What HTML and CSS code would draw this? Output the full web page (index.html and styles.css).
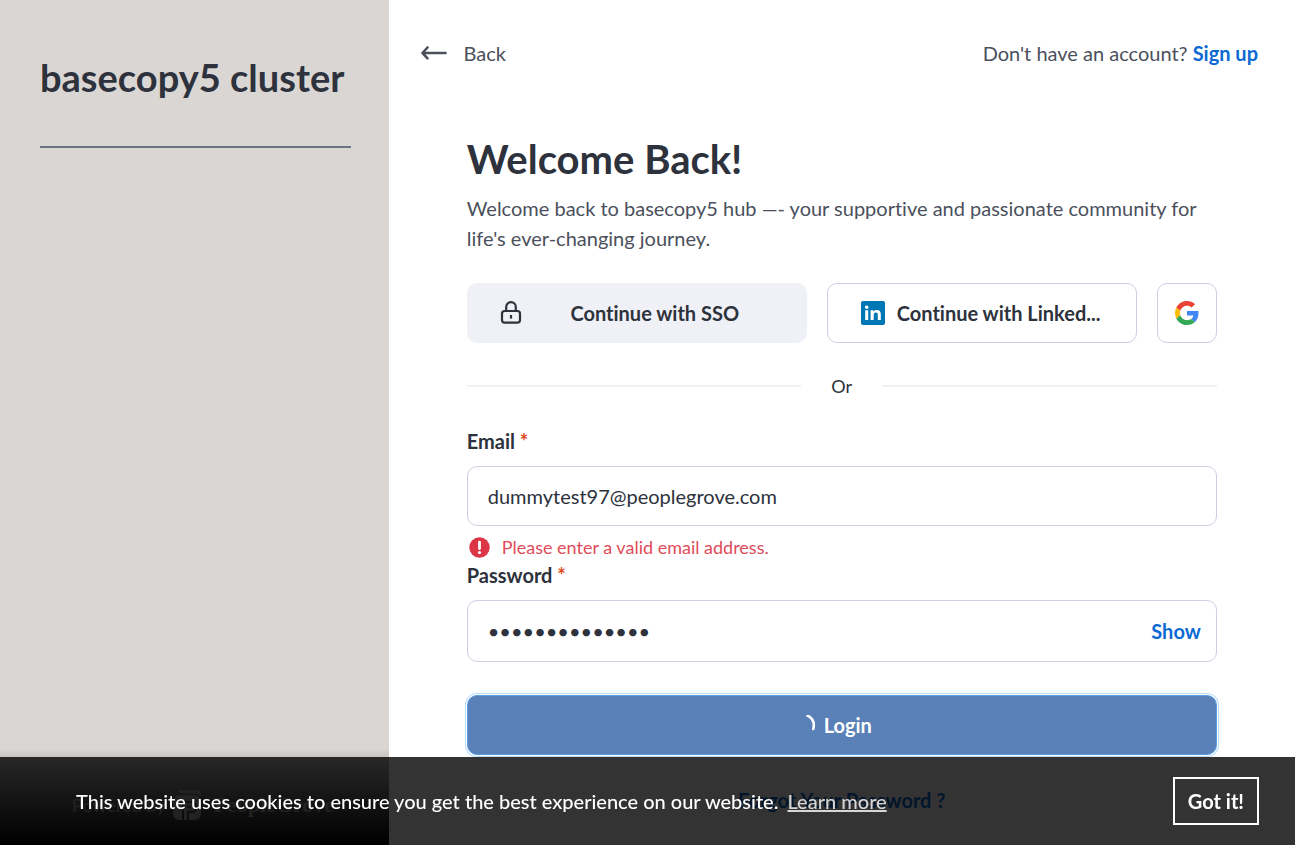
FILE: index.html
```html
<!DOCTYPE html>
<html lang="en">
<head>
<meta charset="utf-8">
<meta name="viewport" content="width=device-width, initial-scale=1">
<title>Welcome Back</title>
<link rel="stylesheet" href="styles.css">
</head>
<body>
<div class="layout">
  <aside class="sidebar">
    <div class="brand">basecopy5 cluster</div>
    <div class="powered">
      <span class="powered-by">Powered by</span>
      <svg width="28" height="30" viewBox="0 0 28 30" fill="currentColor" aria-hidden="true"><path d="M5 0h18q5 0 5 5v1q-2-2.500-6-2.500H9Q6 3.500 5 0z"/><path fill-rule="evenodd" d="M0 12q0-7 7-7h14q7 0 7 7v11q0 7-7 7h-5v-7h2q6 0 6-6t-6-6H9v19H7q-7 0-7-7zM11 13h7q4 0 4 4t-4 4h-4v9h-3zM14 16v2h3q1 0 1-1t-1-1z"/></svg>
      <span class="powered-name">PeopleGrove</span>
    </div>
  </aside>
  <main class="main">
    <header class="topbar">
      <a class="back" href="#">
        <svg width="26" height="14" viewBox="0 0 26 14" fill="none" stroke="currentColor" stroke-width="2.6" stroke-linecap="round" stroke-linejoin="round" aria-hidden="true"><path d="M6.5 1.5 1.5 7l5 5.3M1.5 7H24.5"/></svg>
        <span>Back</span>
      </a>
      <p class="signup">Don't have an account? <a href="#">Sign up</a></p>
    </header>
    <section class="panel">
      <h1>Welcome Back!</h1>
      <p class="intro">Welcome back to basecopy5 hub —- your supportive and passionate community for life's ever-changing journey.</p>
      <div class="providers">
        <button class="provider provider-sso" type="button">
          <svg width="24" height="24" viewBox="0 0 24 24" fill="none" stroke="#2d323c" stroke-width="2.2" aria-hidden="true"><rect x="3" y="10" width="18" height="11.6" rx="2.6"/><path d="M7.2 10V6a4.8 4.8 0 0 1 9.6 0v4"/><path d="M12 14v3.6"/></svg>
          <span>Continue with SSO</span>
        </button>
        <button class="provider provider-linkedin" type="button">
          <svg width="24" height="24" viewBox="0 0 24 24" aria-hidden="true"><rect width="24" height="24" rx="2" fill="#0077b5"/><path fill="#fff" d="M4.2 9.2h3V19h-3zM5.7 4.400a1.800 1.800 0 1 1 0 3.600 1.800 1.800 0 0 1 0-3.600zM9.600 9.200h2.900v1.400c.6-1 1.700-1.700 3.200-1.700 3.200 0 4.100 2 4.100 4.800V19h-3v-4.700c0-1.400-.3-2.800-1.900-2.800-1.700 0-2.200 1.300-2.200 2.800V19H9.600z"/></svg>
          <span>Continue with Linked...</span>
        </button>
        <button class="provider provider-google" type="button" aria-label="Continue with Google">
          <svg width="24" height="24" viewBox="0 0 48 48" aria-hidden="true"><path fill="#EA4335" d="M24 9.5c3.54 0 6.71 1.22 9.21 3.6l6.85-6.85C35.9 2.38 30.47 0 24 0 14.62 0 6.51 5.38 2.56 13.22l7.98 6.19C12.43 13.72 17.74 9.5 24 9.5z"/><path fill="#4285F4" d="M46.98 24.55c0-1.57-.15-3.09-.38-4.55H24v9.02h12.94c-.58 2.96-2.26 5.48-4.78 7.18l7.73 6c4.51-4.18 7.09-10.36 7.09-17.65z"/><path fill="#FBBC05" d="M10.53 28.59A14.5 14.5 0 0 1 9.77 24c0-1.6.27-3.14.76-4.59l-7.98-6.19A23.9 23.9 0 0 0 0 24c0 3.88.92 7.54 2.56 10.78z"/><path fill="#34A853" d="M24 48c6.48 0 11.93-2.13 15.89-5.81l-7.73-6c-2.15 1.45-4.92 2.3-8.16 2.3-6.26 0-11.57-4.22-13.47-9.91l-7.98 6.19C6.51 42.62 14.62 48 24 48z"/></svg>
        </button>
      </div>
      <div class="divider"><span>Or</span></div>
      <form>
        <label class="label" for="email">Email <span class="required">*</span></label>
        <div class="field"><input id="email" type="email" value="dummytest97@peoplegrove.com" aria-describedby="email-error"></div>
        <p class="error" id="email-error">
          <svg width="21" height="21" viewBox="0 0 21 21" aria-hidden="true"><circle cx="10.5" cy="10.5" r="10.2" fill="#dc3545"/><path d="M10.5 5.2v6.4" stroke="#fff" stroke-width="2.8" stroke-linecap="round"/><circle cx="10.5" cy="15.6" r="1.6" fill="#fff"/></svg>
          <span>Please enter a valid email address.</span>
        </p>
        <label class="label" for="password">Password <span class="required">*</span></label>
        <div class="field field-password"><input id="password" type="password" value="dummypassword1"><button class="show" type="button">Show</button></div>
        <button class="login" type="button">
          <svg width="20" height="20" viewBox="0 0 20 20" fill="none" stroke="#fff" stroke-width="2.6" stroke-linecap="round" aria-hidden="true"><path d="M11.5 .5C16.5 3 18.8 8 17.3 14"/></svg>
          <span>Login</span>
        </button>
        <a class="forgot" href="#">Forgot Your Password ?</a>
      </form>
    </section>
  </main>
</div>
<div class="cookies" role="dialog" aria-label="Cookie consent">
  <p>This website uses cookies to ensure you get the best experience on our website. <a href="#">Learn more</a></p>
  <button type="button">Got it!</button>
</div>
</body>
</html>
```
FILE: styles.css
```css
* { box-sizing: border-box; }
body {
  margin: 0;
  font-family: Lato, "Liberation Sans", sans-serif;
  font-size: 20px;
  line-height: 30px;
  font-variant-ligatures: none;
  color: #2d323c;
  background: #fff;
}
h1, p { margin: 0; }
a { text-decoration: none; }
button, input { font: inherit; color: inherit; font-variant-ligatures: none; }
button { cursor: pointer; }
svg { flex: none; display: block; }

.layout { display: flex; height: 100vh; overflow: hidden; }
.sidebar {
  flex: none;
  width: 30%;
  display: flex;
  flex-direction: column;
  justify-content: space-between;
  background: #dad6d3;
}
.brand {
  margin: 0 38px 0 40px;
  padding: 46px 0 38px;
  border-bottom: 2px solid #6b7280;
  font-size: 38px;
  line-height: 62px;
  font-weight: 700;
  white-space: nowrap;
}
.powered {
  display: flex;
  align-items: center;
  gap: 8px;
  height: 96px;
  padding: 16px 16px 0 72px;
  background: linear-gradient(rgba(0, 0, 0, 0), #000);
  color: #a8a8a8;
}
.powered-by { font-size: 18px; white-space: nowrap; }
.powered-name { padding-left: 4px; font-family: "Liberation Serif", serif; font-weight: 700; font-size: 22px; }

.main { flex: 1; min-width: 0; overflow: hidden; }
.topbar {
  display: flex;
  justify-content: space-between;
  padding: 38px 37px 0 32px;
  color: #4b505c;
}
.back { display: flex; align-items: center; gap: 17px; color: inherit; }
.signup a { color: #0b69d4; font-weight: 700; }
.panel { max-width: 750px; margin: 0 auto; padding-top: 61px; }
h1 { font-size: 40px; line-height: 60px; font-weight: 700; }
.intro { padding-top: 4px; color: #4b505c; }

.providers {
  display: grid;
  grid-template-columns: 34fr 31fr 60px;
  gap: 20px;
  margin-top: 30px;
}
.provider {
  display: flex;
  align-items: center;
  gap: 12px;
  min-width: 0;
  height: 60px;
  padding: 0 32px;
  border: 1px solid #cbd0e2;
  border-radius: 10px;
  background: #fff;
  font-weight: 700;
}
.provider span {
  flex: 1;
  overflow: hidden;
  text-overflow: ellipsis;
  white-space: nowrap;
}
.provider-sso { border: 0; background: #f0f1f6; }
.provider-linkedin { padding: 0 24px 0 33px; text-align: left; }
.provider-google { padding: 0; justify-content: center; }

.divider {
  display: flex;
  align-items: center;
  gap: 30px;
  margin-top: 28px;
  font-size: 18px;
}
.divider::before, .divider::after { content: ""; flex: 1; height: 2px; background: #f0f1f3; }

form { padding-top: 25px; }
.label { display: block; font-weight: 700; }
.required { color: #e04a1b; }
.field {
  display: flex;
  align-items: center;
  height: 60px;
  margin-top: 10px;
  padding: 0 15px 0 20px;
  border: 1px solid #cbd0e2;
  border-radius: 10px;
}
.field input {
  flex: 1;
  min-width: 0;
  padding: 0;
  border: 0;
  outline: 0;
  background: none;
}
.field-password { height: 62px; }
.show { padding: 0; border: 0; background: none; color: #0b69d4; font-weight: 700; }
.error {
  display: flex;
  align-items: center;
  gap: 12px;
  padding: 8px 0 0 2px;
  font-size: 18px;
  line-height: 26px;
  color: #e04b59;
}
.login {
  display: flex;
  align-items: center;
  justify-content: center;
  gap: 8px;
  width: 100%;
  height: 60px;
  margin-top: 33px;
  padding: 0 16px 0 0;
  border: 1px solid #5a9ee8;
  border-radius: 10px;
  background: #5980b7;
  box-shadow: 0 0 0 1px #fff, 0 0 0 2px #b9dcfa;
  color: #fff;
  font-weight: 700;
}
.forgot {
  display: block;
  margin-top: 30px;
  text-align: center;
  color: #0b69d4;
  font-weight: 700;
}

.cookies {
  position: fixed;
  left: 0;
  right: 0;
  bottom: 0;
  display: flex;
  align-items: center;
  justify-content: space-between;
  padding: 20px 36px 20px 76px;
  background: rgba(0, 0, 0, 0.8);
  color: #fff;
}
.cookies p { font-weight: 500; }
.cookies a { margin-left: 4px; color: #d6d6d6; text-decoration: underline; text-decoration-thickness: 2px; }
.cookies button {
  height: 48px;
  padding: 0 13px;
  border: 2px solid #fff;
  background: none;
  font-weight: 700;
}
```
